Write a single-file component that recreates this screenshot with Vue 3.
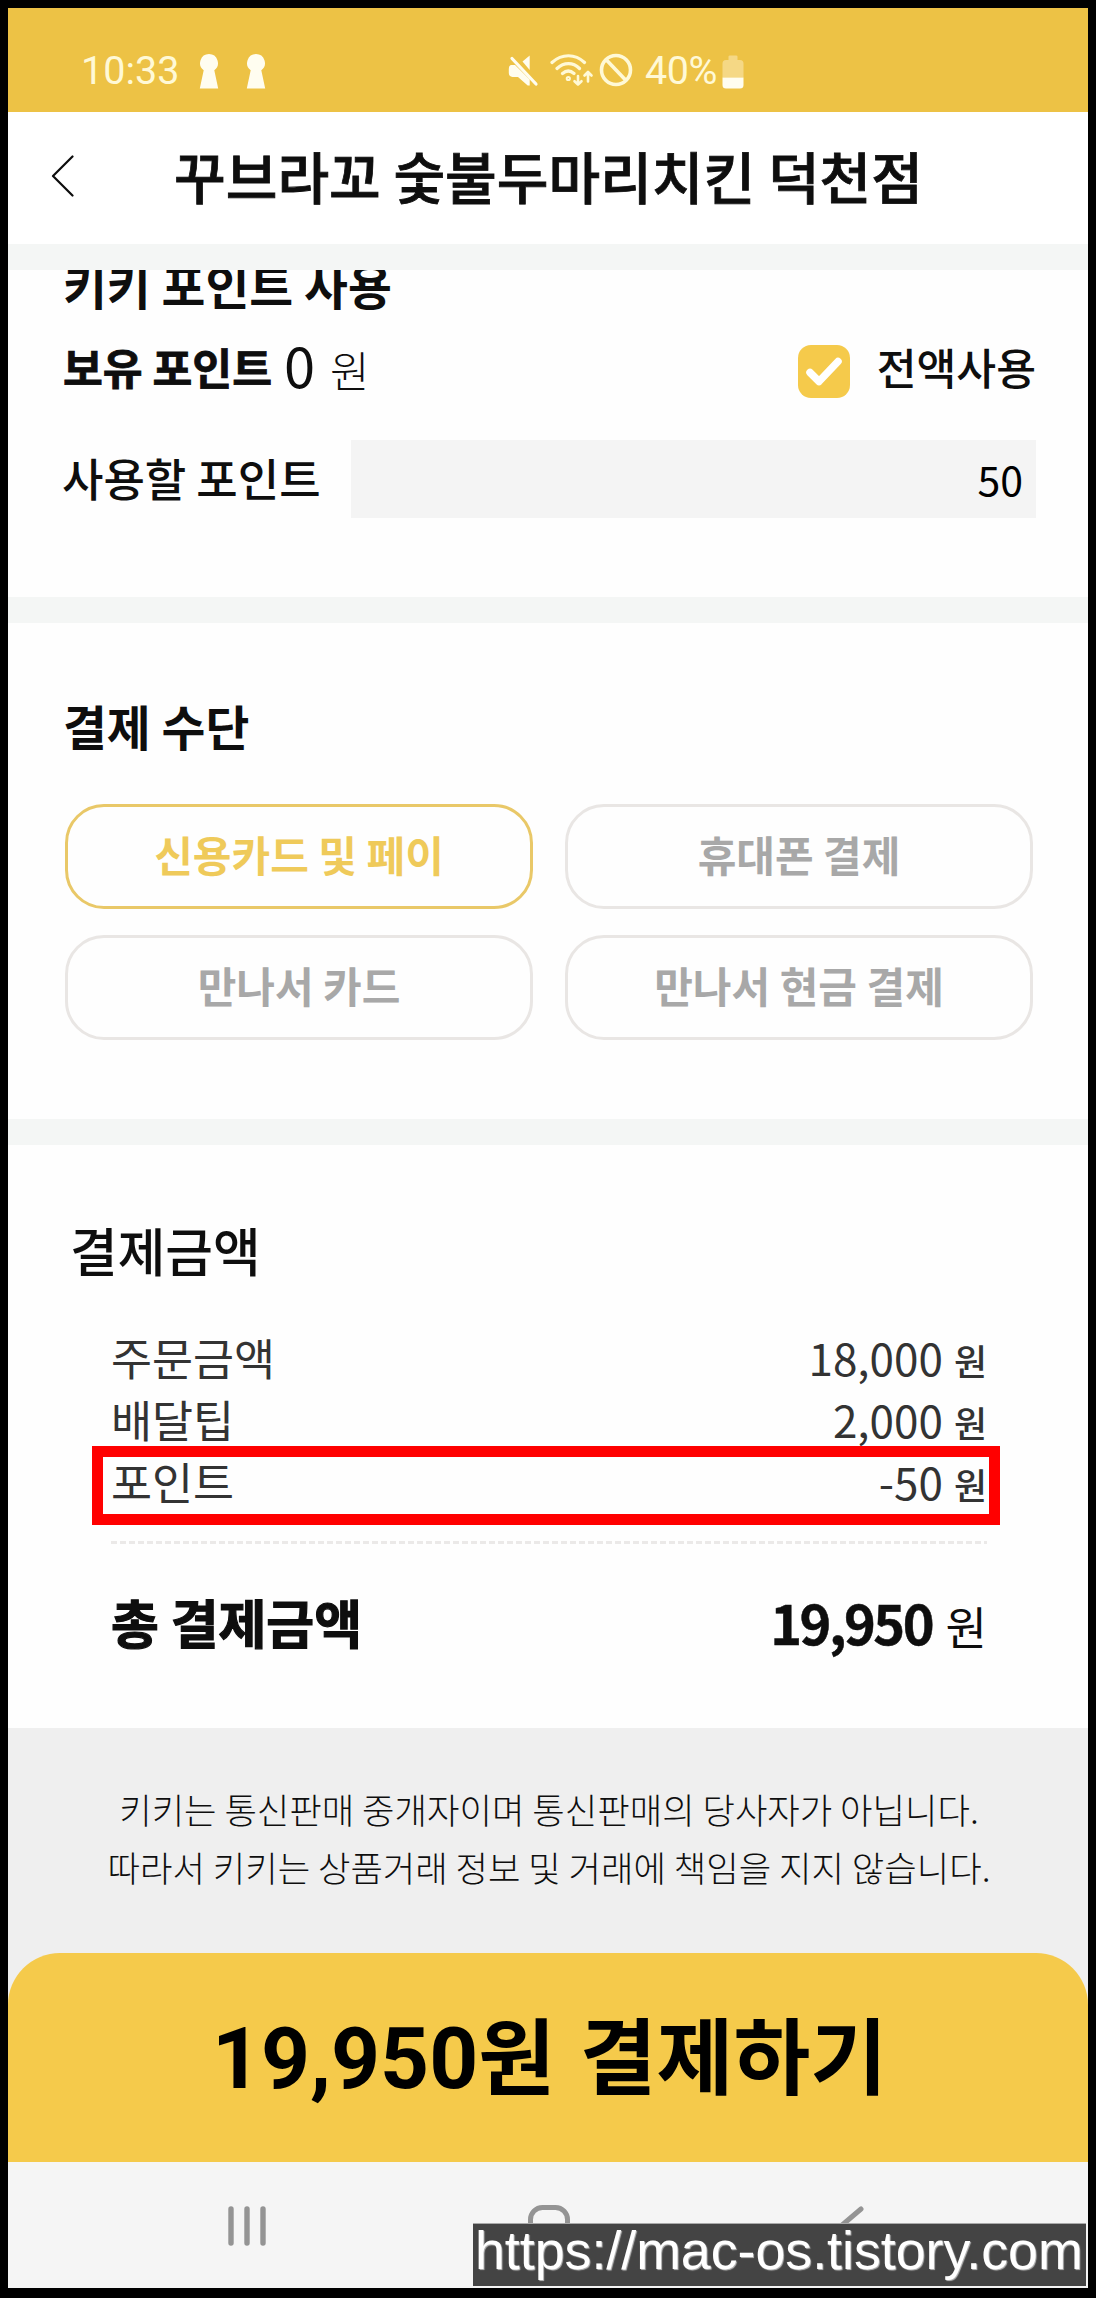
<script setup>
import { ref } from 'vue'

const storeName = '꾸브라꼬 숯불두마리치킨 덕천점'
const methods = ['신용카드 및 페이', '휴대폰 결제', '만나서 카드', '만나서 현금 결제']
const selected = ref(0)
const rows = [
  { label: '주문금액', value: '18,000' },
  { label: '배달팁', value: '2,000' },
  { label: '포인트', value: '-50', marked: true },
]
</script>

<template>
  <div class="screen">
    <div class="status">
      <span class="clock">10:33</span>
      <svg class="keyhole" viewBox="0 0 20 36" width="20" height="36">
        <path d="M10 1a9 9 0 0 1 5.300 16.200L19.200 35.500H.8L4.700 17.200A9 9 0 0 1 10 1Z" fill="#fffdf0" />
      </svg>
      <svg class="keyhole second" viewBox="0 0 20 36" width="20" height="36">
        <path d="M10 1a9 9 0 0 1 5.300 16.200L19.200 35.500H.8L4.700 17.200A9 9 0 0 1 10 1Z" fill="#fffdf0" />
      </svg>
      <svg class="mute" viewBox="0 0 32 34" width="32" height="34">
        <path d="M14.500 7.500 21.700 1.600V16Z" fill="#fffdf0" />
        <path d="M3 11h4l14.700 14.500V31.500h-2L10 23H4.500Q.8 22.500.8 19v-4q0-3.500 2.200-4Z" fill="#fffdf0" />
        <path d="M4 4.500 28 30" stroke="#fffdf0" stroke-width="3.200" stroke-linecap="round" />
      </svg>
      <svg class="wifi" viewBox="0 0 44 34" width="44" height="34" fill="none" stroke="#fff9d6" stroke-width="3.200" stroke-linecap="round" stroke-linejoin="round">
        <path d="M2 9.500C12 .5 25 .5 34.500 9.500M7 15.500c7-6.500 16-6.500 22.500 0M12.500 20.500c4-3.500 7.500-3.500 11.500 0" />
        <circle cx="18.300" cy="25.500" r="1" />
        <path d="M28 23v8M24.500 28.200l3.500 3.300 3.500-3.300M38 28.500v-9M34.500 22.500l3.500-3.500 3.500 3.500" stroke-width="2.600" />
      </svg>
      <svg class="ban" viewBox="0 0 34 34" width="34" height="34" fill="none" stroke="#fff9d6" stroke-width="3.600">
        <circle cx="17" cy="17" r="14.500" />
        <path d="M7 6.500 27 27.500" />
      </svg>
      <span class="percent">40%</span>
      <svg class="battery" viewBox="0 0 22 34" width="22" height="34">
        <path d="M6.500 1.500Q6.500.5 8 .5h6q1.500 0 1.500 1V5h2.500q3.500 0 3.500 3.500V22.500H.5V8.500Q.5 5 4 5h2.500Z" fill="#f5d885" />
        <path d="M.5 22.500h21V30q0 3.500-3.500 3.500H4Q.5 33.500.5 30Z" fill="#fffdf0" />
      </svg>
    </div>

    <header class="header">
      <svg class="back" viewBox="0 0 24 42" width="24" height="42" fill="none" stroke="#0c0c0c" stroke-width="2.200" stroke-linecap="round" stroke-linejoin="round">
        <path d="M21.500 1.500 2 21 21.500 40.500" />
      </svg>
      <h1>{{ storeName }}</h1>
    </header>

    <div class="strip"></div>

    <section class="points">
      <h2>키키 포인트 사용</h2>
      <div class="owned">
        <b>보유 포인트</b>
        <span class="zero">0</span>
        <span class="won-light">원</span>
        <svg class="check" viewBox="0 0 52 53" width="52" height="53">
          <rect width="52" height="53" rx="13" fill="#f5ca4b" />
          <path d="M12 27.500 21 36.500 40 16.500" fill="none" stroke="#fff" stroke-width="7.500" stroke-linecap="round" stroke-linejoin="round" />
        </svg>
        <span class="all">전액사용</span>
      </div>
      <div class="spend">
        <span class="label">사용할 포인트</span>
        <div class="field">50</div>
      </div>
    </section>

    <div class="strip"></div>

    <section class="methods">
      <h2>결제 수단</h2>
      <div class="grid">
        <button
          v-for="(m, i) in methods"
          :key="m"
          :class="{ active: i === selected }"
          @click="selected = i"
        >{{ m }}</button>
      </div>
    </section>

    <div class="strip"></div>

    <section class="amount">
      <h2>결제금액</h2>
      <div class="lines">
        <div v-for="r in rows" :key="r.label" class="line">
          <span>{{ r.label }}</span>
          <span class="value">{{ r.value }}<small>원</small></span>
          <i v-if="r.marked" class="mark"></i>
        </div>
        <div class="dash"></div>
        <div class="total">
          <b>총 결제금액</b>
          <span><b class="sum">19,950</b><span class="won">원</span></span>
        </div>
      </div>
    </section>

    <footer class="footer">
      <p>키키는 통신판매 중개자이며 통신판매의 당사자가 아닙니다.<br />따라서 키키는 상품거래 정보 및 거래에 책임을 지지 않습니다.</p>
      <div class="pay">19,950<span>원 결제하기</span></div>
    </footer>

    <nav class="nav">
      <svg class="recent" viewBox="0 0 40 42" width="40" height="42" stroke="#949494" stroke-width="5.400" stroke-linecap="round">
        <path d="M4 4v34M20 4v34M36 4v34" />
      </svg>
      <svg class="home" viewBox="0 0 42 42" width="42" height="42" fill="none" stroke="#949494" stroke-width="5">
        <rect x="2.500" y="2.500" width="37" height="37" rx="12" />
      </svg>
      <svg class="prev" viewBox="0 0 26 42" width="26" height="42" fill="none" stroke="#949494" stroke-width="5" stroke-linecap="round" stroke-linejoin="round">
        <path d="M23 4 3 21l20 17" />
      </svg>
    </nav>

    <div class="watermark">https://mac-os.tistory.com</div>
  </div>
</template>

<style>
body {
  margin: 0;
  background: #000;
}
</style>

<style scoped>
.screen {
  position: relative;
  box-sizing: border-box;
  width: 1096px;
  height: 2298px;
  padding: 8px 8px 10px;
  background: #000;
  color: #0e0e0e;
  font-family: "Noto Sans CJK KR", sans-serif;
  display: flex;
  flex-direction: column;
  overflow: hidden;
  white-space: nowrap;
}
h1, h2, p {
  margin: 0;
}
.screen > * {
  flex-shrink: 0;
}
.status {
  height: 104px;
  box-sizing: border-box;
  padding: 20px 0 0 73px;
  background: #edc245;
  display: flex;
  align-items: center;
  font: 39.500px/40px Roboto, sans-serif;
  color: #fff9d6;
}
.clock {
  width: 118px;
  margin-top: 2px;
}
.keyhole {
  margin-top: 2px;
}
.keyhole.second {
  margin-left: 27px;
}
.mute {
  margin-left: 242px;
  margin-top: 1px;
}
.wifi {
  margin-left: 10px;
}
.ban {
  margin-left: 5px;
  margin-bottom: 1px;
}
.percent {
  margin-left: 12px;
  margin-top: 1px;
  width: 77px;
  letter-spacing: -0.5px;
}
.battery {
  margin-top: 3px;
}
.header {
  height: 132px;
  box-sizing: border-box;
  padding: 0 150px 0 42.500px;
  background: #fff;
  display: flex;
  align-items: center;
}
.back {
  margin-bottom: 5px;
}
h1 {
  margin-left: 99.500px;
  padding-bottom: 6px;
  font-size: 56.200px;
  line-height: 60px;
  font-weight: 500;
  -webkit-text-stroke: 0.8px #0e0e0e;
}
.strip {
  height: 26px;
  background: #f4f6f5;
}
section {
  box-sizing: border-box;
  background: #fefefe;
  overflow: hidden;
}
h2 {
  font-size: 47.700px;
  line-height: 60px;
  font-weight: 700;
}
.points {
  height: 327px;
  padding: 0 52px 0 55px;
}
.points h2 {
  line-height: 30px;
}
.owned {
  margin-top: 45px;
  height: 53px;
  display: flex;
  align-items: center;
  line-height: 53px;
}
.owned b {
  font-size: 43.300px;
  margin-bottom: 10px;
  -webkit-text-stroke: 0.8px #0e0e0e;
}
.zero {
  font-size: 56px;
  margin: 0 0 16px 12px;
}
.won-light {
  font-size: 43px;
  font-weight: 300;
  margin: 0 0 5px 15px;
}
.check {
  margin-left: auto;
}
.all {
  font-size: 43.300px;
  font-weight: 500;
  margin: 0 0 10px 27px;
}
.spend {
  margin-top: 42px;
  height: 78px;
  display: flex;
  align-items: center;
}
.label {
  width: 289px;
  margin-left: -1px;
  font-size: 45px;
  line-height: 60px;
  font-weight: 500;
  margin-bottom: 2px;
}
.field {
  flex: 1;
  height: 78px;
  box-sizing: border-box;
  padding-right: 13px;
  background: #f4f4f4;
  color: #000;
  font-size: 41px;
  line-height: 77px;
  text-align: right;
}
.methods {
  height: 496px;
  padding: 73px 55px 0 57px;
}
.methods h2 {
  margin-left: -2px;
}
.grid {
  margin-top: 48px;
  display: grid;
  grid-template-columns: 1fr 1fr;
  gap: 26px 32px;
}
.grid button {
  box-sizing: border-box;
  height: 105px;
  margin: 0;
  padding: 0 0 5px;
  border: 3px solid #e9e6e4;
  border-radius: 39px;
  background: none;
  color: #a8a8a8;
  font: 700 42px/60px "Noto Sans CJK KR", sans-serif;
}
.grid button.active {
  border-color: #e9c868;
  color: #efca5a;
}
.amount {
  height: 583px;
  padding: 75px 101px 0 103px;
}
.amount h2 {
  margin-left: -41px;
  font-size: 51.800px;
  font-weight: 500;
}
.lines {
  margin-top: 46px;
}
.line {
  position: relative;
  height: 62px;
  display: flex;
  justify-content: space-between;
  font-size: 44.600px;
  line-height: 62px;
  color: #333;
}
.value {
  font-size: 44px;
}
.value small {
  margin-left: 11px;
  font-size: 36px;
  font-weight: 500;
}
.mark {
  position: absolute;
  left: -19px;
  right: -13px;
  top: -4px;
  height: 79px;
  box-sizing: border-box;
  border: 11px solid #f00;
}
.dash {
  margin-top: 29px;
  height: 3px;
  background: repeating-linear-gradient(90deg, #ebe9e8 0 6px, transparent 6px 9px);
}
.total {
  margin-top: 47px;
  display: flex;
  justify-content: space-between;
  font-size: 52px;
  line-height: 62px;
}
.total > b {
  -webkit-text-stroke: 1.200px #0e0e0e;
}
.sum {
  font-size: 54px;
  letter-spacing: -2.500px;
  -webkit-text-stroke: 0.5px #0e0e0e;
}
.won {
  margin-left: 13.500px;
  font-size: 45px;
}
.footer {
  height: 434px;
  background: #efefef;
}
.footer p {
  height: 225px;
  box-sizing: border-box;
  padding: 52px 0 0 2px;
  text-align: center;
  font-size: 35.300px;
  line-height: 58px;
  font-weight: 300;
}
.pay {
  height: 209px;
  box-sizing: border-box;
  padding-left: 3px;
  border-radius: 52px 52px 0 0;
  background: #f5ca4b;
  color: #000;
  text-align: center;
  font: 700 85.500px/212px Roboto, "Noto Sans CJK KR", sans-serif;
}
.pay span {
  font-size: 83.500px;
  word-spacing: 4px;
}
.nav {
  height: 126px;
  box-sizing: border-box;
  padding: 43px 0 0 219px;
  background: #f5f5f5;
  display: flex;
}
.home {
  margin-left: 261px;
}
.prev {
  margin-left: 268px;
}
.watermark {
  position: absolute;
  left: 473px;
  top: 2223px;
  width: 613px;
  height: 63px;
  box-sizing: border-box;
  padding-left: 2px;
  border-top: 1px solid #aaa;
  background: #444;
  color: #fff;
  font: 53.700px/53px "Liberation Sans", sans-serif;
  text-shadow: 1px 1px 1px #bbb;
}
</style>
